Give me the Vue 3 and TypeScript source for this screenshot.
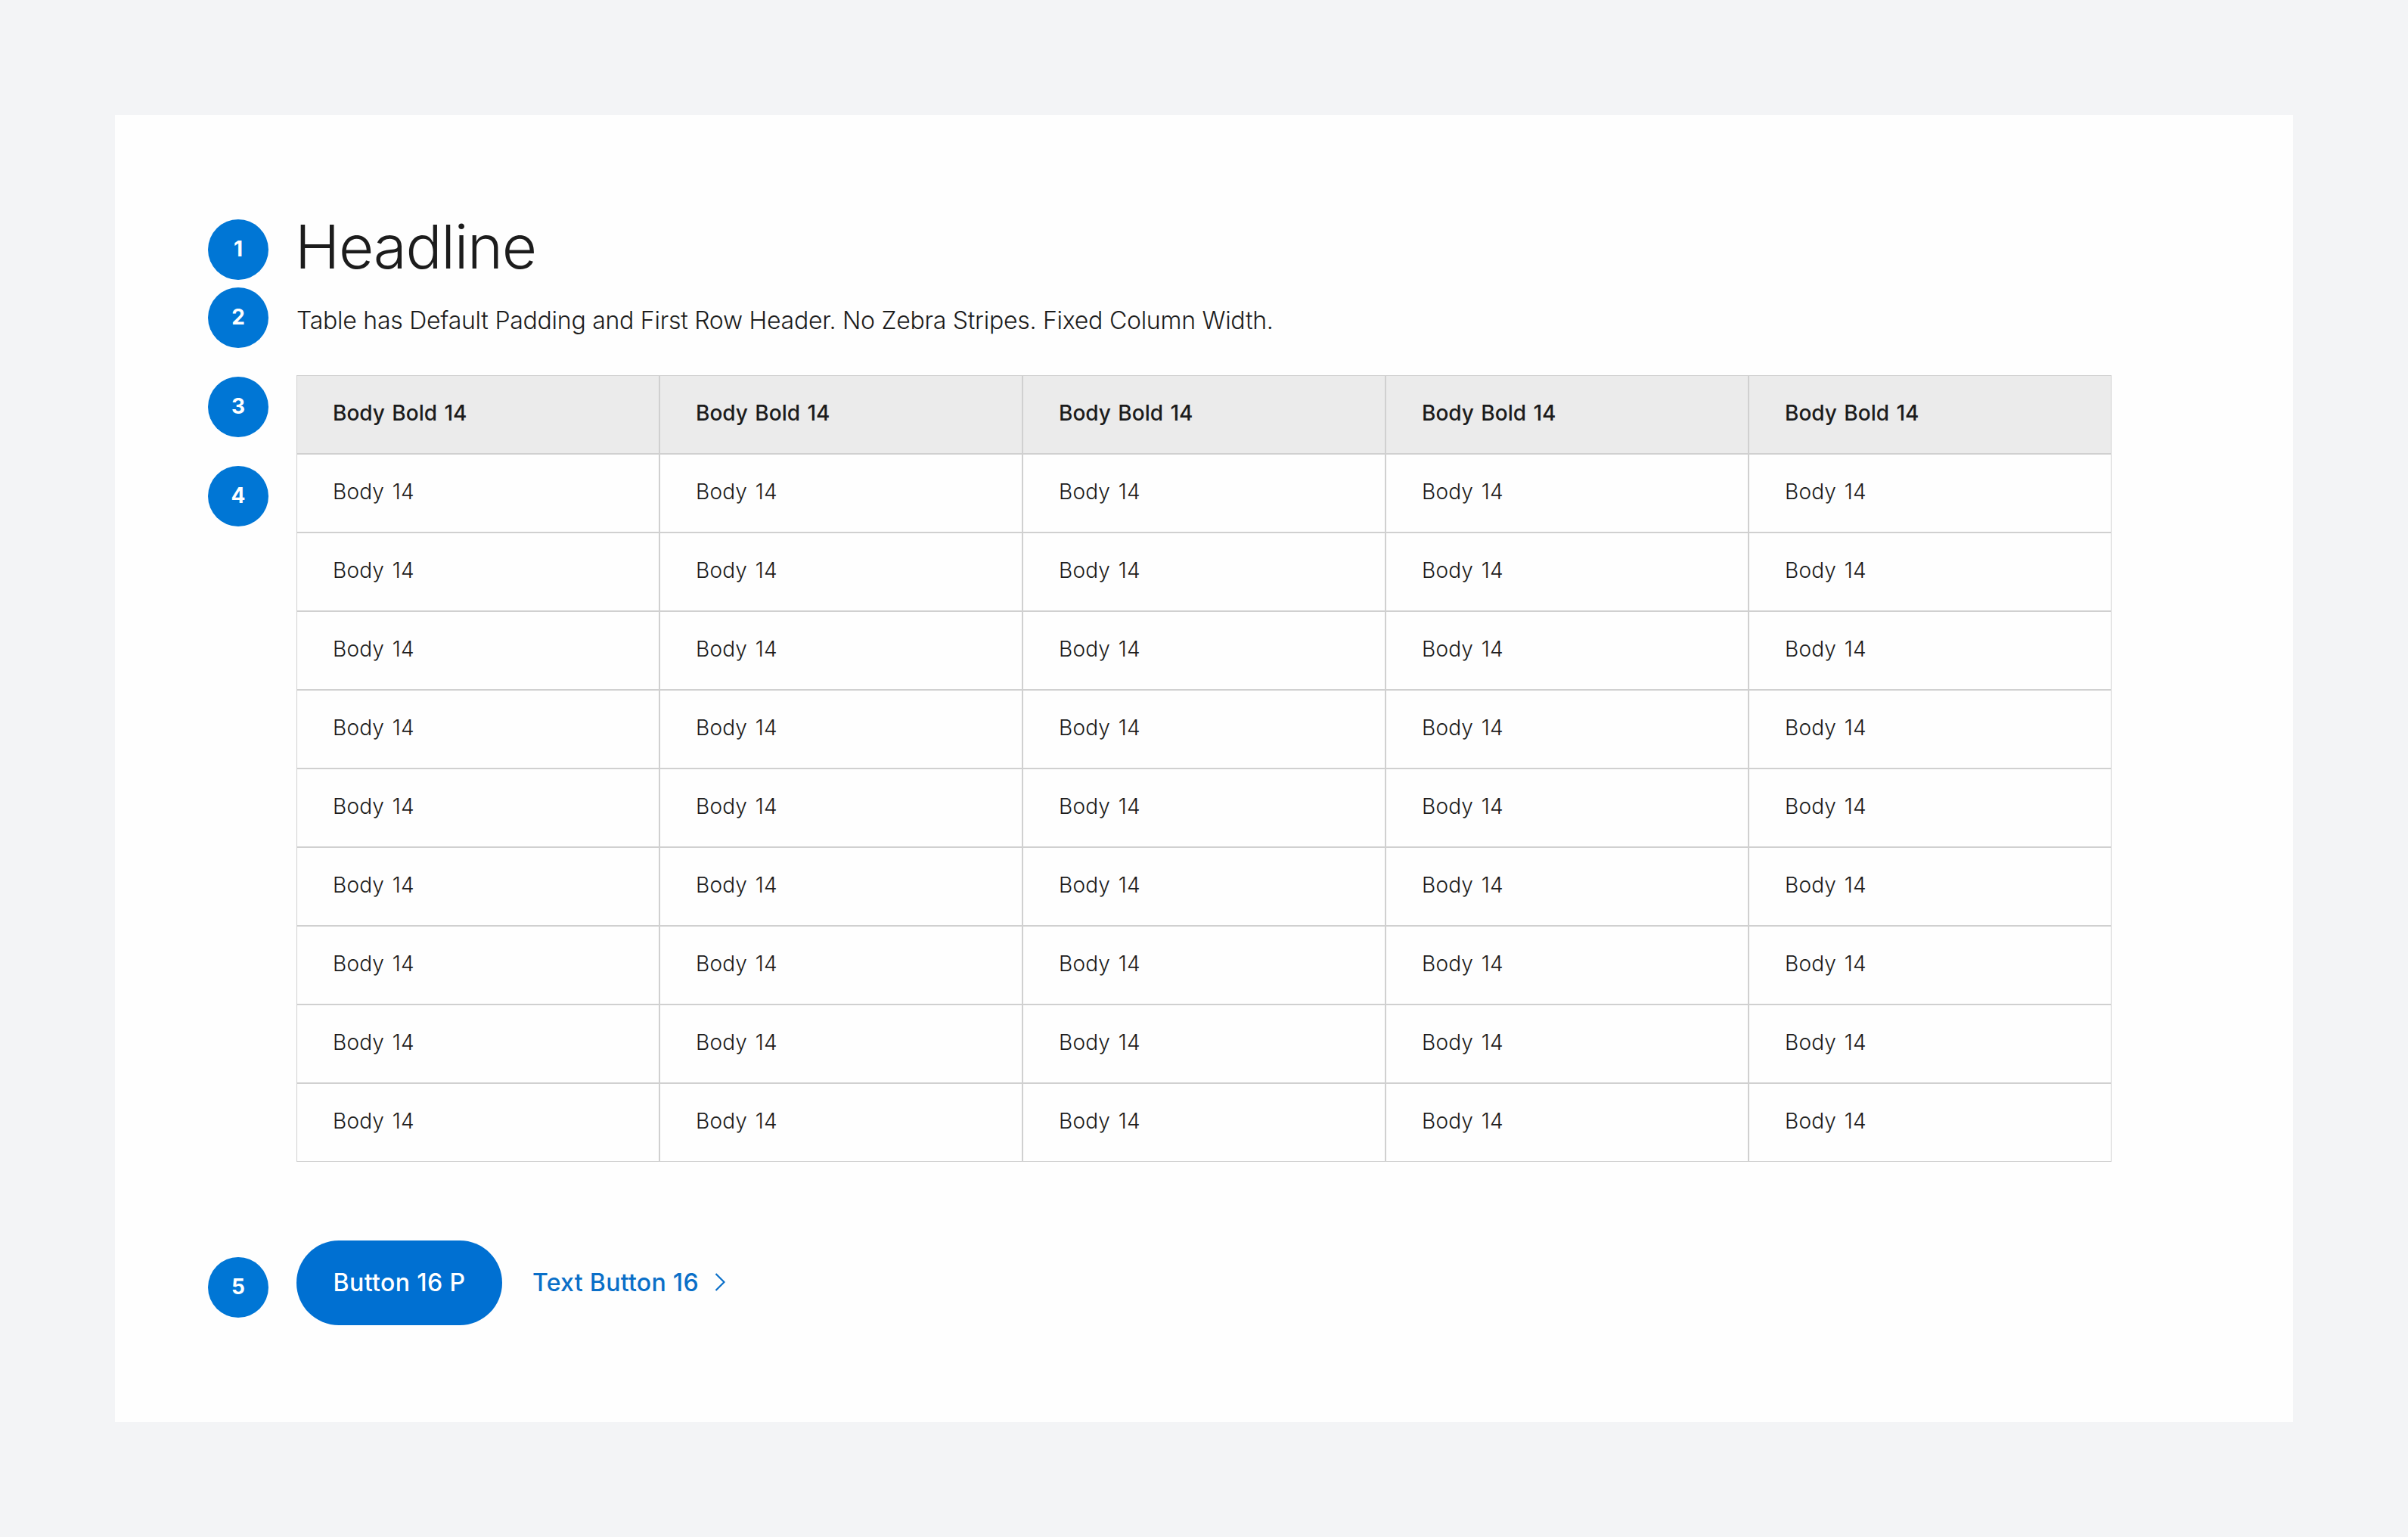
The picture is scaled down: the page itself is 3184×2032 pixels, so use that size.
<script setup lang="ts">
const columns: number[] = [1, 2, 3, 4, 5]
const rows: number[] = [1, 2, 3, 4, 5, 6, 7, 8, 9]
</script>

<template>
  <div class="page">
    <main class="card">
      <aside class="markers">
        <span class="marker m1">1</span>
        <span class="marker m2">2</span>
        <span class="marker m3">3</span>
        <span class="marker m4">4</span>
        <span class="marker m5">5</span>
      </aside>
      <section class="content">
        <h1 class="headline">Headline</h1>
        <p class="subtitle">Table has Default Padding and First Row Header. No Zebra Stripes. Fixed Column Width.</p>
        <table class="grid">
          <thead>
            <tr>
              <th v-for="c in columns" :key="c">Body Bold 14</th>
            </tr>
          </thead>
          <tbody>
            <tr v-for="r in rows" :key="r">
              <td v-for="c in columns" :key="c">Body 14</td>
            </tr>
          </tbody>
        </table>
        <div class="actions">
          <button class="primary" type="button">Button 16 P</button>
          <a class="text-button">
            Text Button 16
            <svg class="chev" viewBox="0 0 14 24" width="14" height="24" fill="none" aria-hidden="true">
              <path d="M1.5 1 L12.5 12 L1.5 23" stroke="currentColor" stroke-width="2.2" />
            </svg>
          </a>
        </div>
      </section>
    </main>
  </div>
</template>

<style>
html, body { margin: 0; background: #f3f4f6; }
</style>

<style scoped>
.page {
  width: 3184px;
  height: 2032px;
  box-sizing: border-box;
  padding: 152px;
  background: #f3f4f6;
  font-family: Inter, "Liberation Sans", sans-serif;
  color: #1c1c1c;
}
.card {
  display: flex;
  width: 2880px;
  height: 1728px;
  background: #fefefe;
  box-sizing: border-box;
  padding-left: 123px;
}
.markers {
  display: flex;
  flex-direction: column;
  width: 80px;
  margin-right: 37px;
  padding-top: 138px;
}
.marker {
  display: flex;
  align-items: center;
  justify-content: center;
  width: 80px;
  height: 80px;
  box-sizing: border-box;
  padding-bottom: 3px;
  border-radius: 50%;
  background: #0076d5;
  color: #fff;
  font-size: 28px;
  font-weight: 700;
}
.m2 { margin-top: 10px; }
.m3 { margin-top: 38px; }
.m4 { margin-top: 38px; }
.m5 { margin-top: 966px; }
.content {
  display: flex;
  flex-direction: column;
  width: 2400px;
  padding-top: 130px;
}
.headline {
  margin: 0 0 0 -2px;
  font-size: 80px;
  line-height: 88px;
  font-weight: 300;
  letter-spacing: -1.3px;
}
.subtitle {
  margin: 32px 0 0;
  font-size: 32px;
  line-height: 44px;
  font-weight: 300;
  letter-spacing: -0.25px;
}
.grid {
  margin-top: 50px;
  width: 2400px;
  table-layout: fixed;
  border-collapse: separate;
  border-spacing: 0;
}
.grid th,
.grid td {
  height: 104px;
  box-sizing: border-box;
  padding: 0 47px 4px;
  border: 1px solid #d0d0d0;
  text-align: left;
  font-size: 28px;
}
.grid th {
  background: #ebebeb;
  font-weight: 500;
  word-spacing: 2px;
}
.grid td {
  font-weight: 300;
  letter-spacing: 0.2px;
  word-spacing: 2.6px;
}
.actions {
  display: flex;
  align-items: center;
  gap: 40px;
  margin-top: 104px;
}
.primary {
  height: 112px;
  width: 272px;
  border: 0;
  border-radius: 56px;
  background: #0070d2;
  color: #fff;
  font-family: inherit;
  font-size: 32px;
  font-weight: 500;
  letter-spacing: 0.4px;
  padding: 0 0 2px;
}
.text-button {
  display: flex;
  align-items: center;
  gap: 21px;
  color: #0a6fc8;
  font-size: 32px;
  font-weight: 500;
  letter-spacing: 0.3px;
  padding-bottom: 2px;
}
.chev { display: block; }
</style>
